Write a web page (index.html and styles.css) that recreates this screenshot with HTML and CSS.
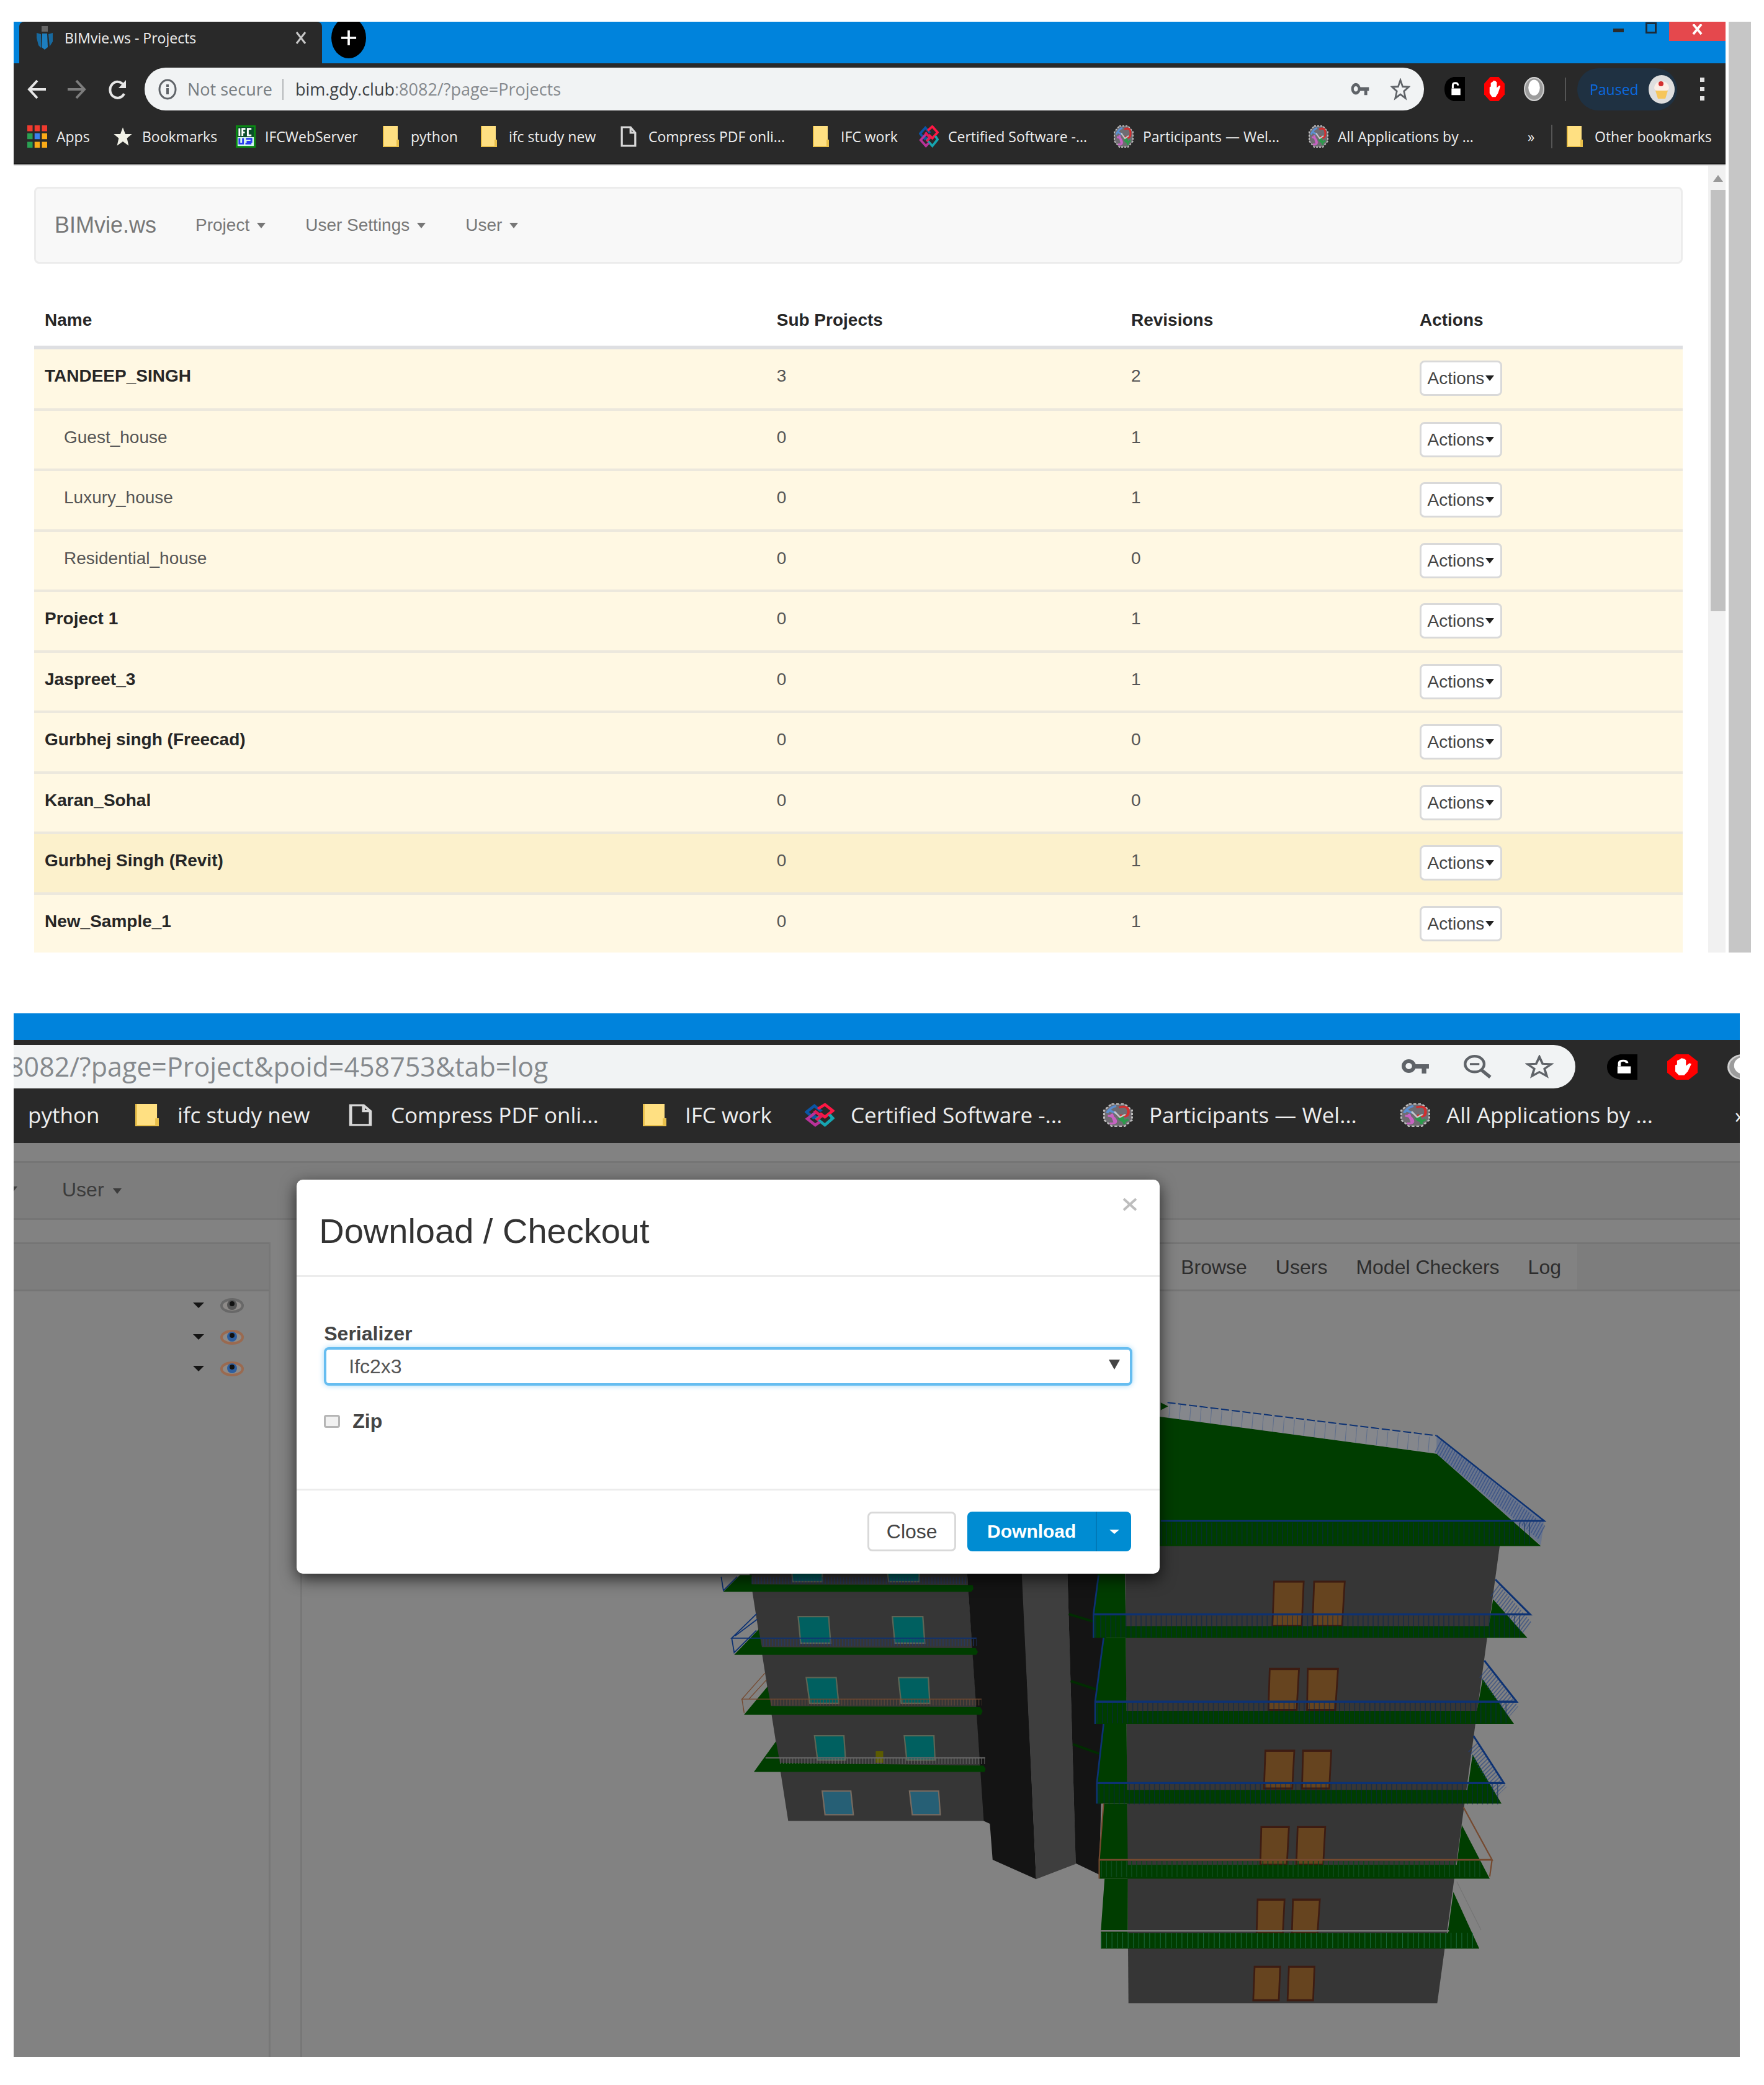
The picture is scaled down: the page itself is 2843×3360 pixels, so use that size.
FILE: index.html
```html
<!DOCTYPE html>
<html lang="en">
<head>
<meta charset="utf-8">
<title>BIMvie.ws - Projects</title>
<link rel="stylesheet" href="styles.css">
</head>
<body>
<svg class="defs" width="0" height="0" aria-hidden="true">
  <symbol id="folder" viewBox="0 0 26 34" preserveAspectRatio="none"><path d="M0 0h24v22h2v12H0z" fill="#ffe082"/><path d="M0 32h26v2H0zM22 22h4v12h-4zM0 0h2v34H0z" fill="#e8bf4a"/></symbol>
  <symbol id="doc" viewBox="0 0 24 34" preserveAspectRatio="none"><path d="M2 2h13l7 9v21H2zM15 2v9h7" fill="none" stroke="#d8d8d8" stroke-width="3"/></symbol>
  <symbol id="cert" viewBox="0 0 34 38" preserveAspectRatio="none"><g fill="none" stroke-width="4"><path d="M13 20l-3 3-8-9 9-10 8 9" stroke="#0a55a5"/><path d="M15 9l8-7 9 10-9 10-6-6" stroke="#ff1744"/><path d="M28 18l4 6-9 11-9-10 4-5" stroke="#16a5b0"/><path d="M17 30l-5 5-9-10 10-11" stroke="#b83299"/><path d="M11 12l8 9-6 6" stroke="#e01a59"/></g></symbol>
  <symbol id="globe" viewBox="0 0 32 34" preserveAspectRatio="none"><path d="M9 1h14l8 9v14l-8 9H9l-8-9V10z" fill="#6f6c72" stroke="#bdbdbd" stroke-width="2" stroke-dasharray="3 2"/><g fill="none" stroke-width="3"><path d="M4 14q4-9 10-10M6 10l8 4" stroke="#5b8fd0"/><path d="M17 6q10-4 10 6t-9 5" stroke="#d22f2f"/><path d="M5 18q6 0 8 6t-6 5M9 15l4 14" stroke="#c763c2"/><path d="M17 21q4 8 10 2M20 18l3 12" stroke="#2c9a4b"/><path d="M12 12l6 8 6-4" stroke="#c9c9c9" stroke-width="2"/></g></symbol>
  <symbol id="key" viewBox="0 0 44 26" preserveAspectRatio="none"><circle cx="12" cy="12" r="8" fill="none" stroke="#5f6368" stroke-width="6"/><path d="M20 9h23v7h-4v8h-7v-8H20z" fill="#5f6368"/></symbol>
  <symbol id="star-o" viewBox="0 0 24 24" preserveAspectRatio="none"><path d="M12 2l2.7 7 7.3.4-5.700 4.700L18.200 21.500 12 17.400 5.800 21.500 7.700 14.100 2 9.400 9.300 9z" fill="none" stroke="#5f6368" stroke-width="2"/></symbol>
  <symbol id="ext-lock" viewBox="0 0 32 40" preserveAspectRatio="none"><path d="M14 0h18v40H14Q0 36 0 20T14 0z" fill="#000"/><path d="M11 19h14v11H11z" fill="#fff"/><path d="M13 19v-5q0-4 4-4t4 4" fill="none" stroke="#fff" stroke-width="3"/></symbol>
  <symbol id="ext-hand" viewBox="0 0 34 40" preserveAspectRatio="none"><path d="M10 0h14l10 11v18L24 40H10L0 29V11z" fill="#f00"/><path d="M9 17l2-1V10l3-2 2-2 3 1 2 2v9l4-4 2 1-4 12-4 6h-6l-4-6z" fill="#fff"/></symbol>
  <symbol id="ext-ball" viewBox="0 0 32 34" preserveAspectRatio="none"><ellipse cx="16" cy="17" rx="15" ry="16" fill="#9c9c9c" stroke="#d0d0d0" stroke-width="2"/><ellipse cx="16" cy="15" rx="9" ry="11" fill="#fff"/></symbol>
  <symbol id="eye" viewBox="0 0 38 24"><ellipse cx="19" cy="12" rx="17" ry="10" fill="#8d8a88" stroke="currentColor" stroke-width="4"/><circle class="iris" cx="19" cy="11" r="8"/><circle cx="19" cy="9" r="4" fill="#111"/></symbol>
</svg>

<section class="shot">
  <div class="browser">
    <header class="tabstrip">
      <div class="tab">
        <svg class="favicon" viewBox="0 0 28 38"><path d="M9 0h10v9H9z" fill="#666"/><path d="M1 11l7 2v22l-4-4-3-12z" fill="#17699f"/><path d="M10 12h8l1 22-5 4-5-4z" fill="#1d7fc0"/><path d="M20 13l7-2v14l-5 8z" fill="#17699f"/></svg>
        <span class="tab-title">BIMvie.ws - Projects</span>
        <button class="tab-close" aria-label="Close tab"><svg viewBox="0 0 18 22"><path d="M2 2l14 18M16 2L2 20" stroke="#c8c8c8" stroke-width="3"/></svg></button>
      </div>
      <button class="new-tab" aria-label="New tab"><svg viewBox="0 0 28 28"><path d="M14 1v26M1 14h26" stroke="#fff" stroke-width="4"/></svg></button>
      <div class="win-controls">
        <button class="win min" aria-label="Minimize"></button>
        <button class="win restore" aria-label="Restore"></button>
        <button class="win close" aria-label="Close"><svg viewBox="0 0 18 18"><path d="M2 0l14 17M16 0L2 17" stroke="#fff" stroke-width="4"/></svg></button>
      </div>
    </header>
    <div class="toolbar">
      <button class="tool" aria-label="Back"><svg viewBox="0 0 30 34"><path d="M30 17H4M16 3L3 17l13 14" fill="none" stroke="#e6e6e6" stroke-width="4"/></svg></button>
      <button class="tool" aria-label="Forward"><svg viewBox="0 0 30 34"><path d="M0 17h26M14 3l13 14-13 14" fill="none" stroke="#7d7d7d" stroke-width="4"/></svg></button>
      <button class="tool" aria-label="Reload"><svg viewBox="0 0 30 34"><path d="M26 24a12 13 0 1 1-1-14" fill="none" stroke="#e6e6e6" stroke-width="4"/><path d="M29 2v13H17z" fill="#e6e6e6"/></svg></button>
      <div class="omnibox">
        <svg class="info" viewBox="0 0 30 34" preserveAspectRatio="none"><ellipse cx="15" cy="17" rx="13" ry="15" fill="none" stroke="#5f6368" stroke-width="3"/><path d="M15 9v4M15 15v10" stroke="#5f6368" stroke-width="4"/></svg>
        <span class="insecure">Not secure</span>
        <label class="host" for="url1">bim.gdy.club</label><input id="url1" class="url" value=":8082/?page=Projects">
        <svg class="i-key"><use href="#key"/></svg>
        <svg class="i-star"><use href="#star-o"/></svg>
      </div>
      <div class="exts">
        <svg><use href="#ext-lock"/></svg><svg><use href="#ext-hand"/></svg><svg><use href="#ext-ball"/></svg>
      </div>
      <span class="rule"></span>
      <button class="profile">Paused
        <svg viewBox="0 0 42 46"><ellipse cx="21" cy="23" rx="21" ry="23" fill="#dedede"/><path d="M9 20q2-10 12-10t12 10q0 5-6 5H15q-6 0-6-5z" fill="#fbeee6"/><path d="M11 25h20l-4 13H15z" fill="#f6c65b"/><circle cx="20" cy="14" r="4" fill="#d32f2f"/></svg>
      </button>
      <button class="dots" aria-label="Menu"><i></i><i></i><i></i></button>
    </div>
    <nav class="bookmarks">
      <a href="#"><svg viewBox="0 0 30 34" preserveAspectRatio="none"><path d="M0 0h8v9H0zM11 0h8v9h-8zM22 0h8v9h-8z" fill="#f03a2e"/><path d="M0 12h8v9H0zM0 25h8v9H0z" fill="#2aa052"/><path d="M11 12h8v9h-8z" fill="#3b82f0"/><path d="M22 12h8v9h-8zM11 25h8v9h-8zM22 25h8v9h-8z" fill="#fbab17"/></svg>Apps</a>
      <a href="#"><svg viewBox="0 0 24 24"><path d="M12 1l3 8h8l-6 5 2 9-7-5-7 5 2-9-6-5h8z" fill="#f1f1e6"/></svg>Bookmarks</a>
      <a href="#"><svg viewBox="0 0 33 38" preserveAspectRatio="none"><path d="M0 0h33v38H0z" fill="#0a8a12"/><path d="M3 3h27v17H3z" fill="#0b4d2a"/><path d="M3 20h27v15H3z" fill="#d5f5ee"/><path d="M6 5v13M11 18V6h5M11 12h4M26 6h-6v11h6" stroke="#fff" stroke-width="3" fill="none"/><path d="M6 22v9h6v-9M16 31h10M17 23h9v5h-8" stroke="#2a3cf0" stroke-width="3" fill="none"/></svg>IFCWebServer</a>
      <a href="#"><svg class="narrow"><use href="#folder"/></svg>python</a>
      <a href="#"><svg class="narrow"><use href="#folder"/></svg>ifc study new</a>
      <a href="#"><svg class="narrow"><use href="#doc"/></svg>Compress PDF onli...</a>
      <a href="#"><svg class="narrow"><use href="#folder"/></svg>IFC work</a>
      <a href="#"><svg><use href="#cert"/></svg>Certified Software -...</a>
      <a href="#"><svg><use href="#globe"/></svg>Participants — Wel...</a>
      <a href="#"><svg><use href="#globe"/></svg>All Applications by ...</a>
      <a href="#">»</a>
      <span class="rule"></span>
      <a href="#"><svg class="narrow"><use href="#folder"/></svg>Other bookmarks</a>
    </nav>
    <div class="viewport">
      <main class="page">
        <nav class="navbar">
          <a class="brand" href="#">BIMvie.ws</a>
          <a class="menu" href="#">Project<i class="caret"></i></a>
          <a class="menu" href="#">User Settings<i class="caret"></i></a>
          <a class="menu" href="#">User<i class="caret"></i></a>
        </nav>
        <table class="projects">
          <thead><tr><th class="c-name">Name</th><th class="c-sub">Sub Projects</th><th class="c-rev">Revisions</th><th>Actions</th></tr></thead>
          <tbody>
            <tr><td class="top">TANDEEP_SINGH</td><td>3</td><td>2</td><td><button class="action">Actions<i class="caret"></i></button></td></tr>
            <tr><td class="sub">Guest_house</td><td>0</td><td>1</td><td><button class="action">Actions<i class="caret"></i></button></td></tr>
            <tr><td class="sub">Luxury_house</td><td>0</td><td>1</td><td><button class="action">Actions<i class="caret"></i></button></td></tr>
            <tr><td class="sub">Residential_house</td><td>0</td><td>0</td><td><button class="action">Actions<i class="caret"></i></button></td></tr>
            <tr><td class="top">Project 1</td><td>0</td><td>1</td><td><button class="action">Actions<i class="caret"></i></button></td></tr>
            <tr><td class="top">Jaspreet_3</td><td>0</td><td>1</td><td><button class="action">Actions<i class="caret"></i></button></td></tr>
            <tr><td class="top">Gurbhej singh (Freecad)</td><td>0</td><td>0</td><td><button class="action">Actions<i class="caret"></i></button></td></tr>
            <tr><td class="top">Karan_Sohal</td><td>0</td><td>0</td><td><button class="action">Actions<i class="caret"></i></button></td></tr>
            <tr class="hover"><td class="top">Gurbhej Singh (Revit)</td><td>0</td><td>1</td><td><button class="action">Actions<i class="caret"></i></button></td></tr>
            <tr><td class="top">New_Sample_1</td><td>0</td><td>1</td><td><button class="action">Actions<i class="caret"></i></button></td></tr>
          </tbody>
        </table>
      </main>
      <div class="scrollbar"><i class="arrow"></i><i class="thumb"></i></div>
    </div>
  </div>
  <div class="edge"></div>
</section>

<section class="zoomed">
  <div class="strip"></div>
  <div class="toolbar2">
    <div class="omnibox2">
      <input class="url2" aria-label="Address" value="8082/?page=Project&amp;poid=458753&amp;tab=log">
      <svg class="k"><use href="#key"/></svg>
      <svg viewBox="0 0 42 36" preserveAspectRatio="none"><ellipse cx="17" cy="14" rx="14" ry="12" fill="none" stroke="#5f6368" stroke-width="4"/><path d="M27 23l13 11" stroke="#5f6368" stroke-width="5"/><path d="M10 14h14" stroke="#5f6368" stroke-width="3"/></svg>
      <svg><use href="#star-o"/></svg>
    </div>
    <div class="exts2"><svg><use href="#ext-lock"/></svg><svg><use href="#ext-hand"/></svg><svg><use href="#ext-ball"/></svg></div>
  </div>
  <nav class="bookmarks2">
    <a href="#">python</a>
    <a href="#"><svg><use href="#folder"/></svg>ifc study new</a>
    <a href="#"><svg><use href="#doc"/></svg>Compress PDF onli...</a>
    <a href="#"><svg><use href="#folder"/></svg>IFC work</a>
    <a href="#"><svg class="wide"><use href="#cert"/></svg>Certified Software -...</a>
    <a href="#"><svg class="wide"><use href="#globe"/></svg>Participants — Wel...</a>
    <a href="#"><svg class="wide"><use href="#globe"/></svg>All Applications by ...</a>
    <a href="#">»</a>
  </nav>
  <div class="dimmed">
    <nav class="navbar2"><i class="caret"></i><a href="#">User<i class="caret"></i></a></nav>
    <div class="panels">
      <aside class="tree">
        <div class="panel-head"></div>
        <ul>
          <li><i class="caret"></i><svg class="eye off"><use href="#eye"/></svg></li>
          <li><i class="caret"></i><svg class="eye"><use href="#eye"/></svg></li>
          <li><i class="caret"></i><svg class="eye"><use href="#eye"/></svg></li>
        </ul>
      </aside>
      <div class="viewer">
        <div class="panel-head tabs">
          <div class="tablist"><a href="#">Browse</a><a href="#">Users</a><a href="#">Model Checkers</a><a href="#">Log</a></div>
        </div>
        <svg class="model" viewBox="487 2080 2317 1234" preserveAspectRatio="xMinYMin slice">
          <g transform="translate(1140 2380) scale(.4464)">
            <path d="M145 300h790l65 940H292z" fill="#363636"/>
            <path d="M935 300h200l52 1150-157-70-10-130-22-10z" fill="#141414"/>
            <path d="M1133 300h166l31 1095-143 55z" fill="#3e3e3e"/>
            <path d="M1299 300h150l-35 1133-84-40z" fill="#141414"/>
            <path d="M1305 493l92 28M1312 735l92 30M1320 963l95 34" stroke="#012c01" stroke-width="9"/>
            <g fill="#006060" stroke="#5c6555" stroke-width="5">
              <path d="M305 340h110v36H308zM650 340h115v36H655z"/>
              <path d="M328 502h110l7 96H337zM668 502h110l7 96H677zM357 722h108l9 93H370zM690 722h108l5 93H700zM387 932h106l6 88H398zM711 932h107l4 88H720z"/>
              <path d="M415 1132h103l9 85H425zM730 1132h105l6 85H740z" fill="#265f75" stroke="#776b60"/>
            </g>
            <path d="M608 988h27v42h-27z" fill="#5c5c00"/>
            <g fill="#003d00">
              <path d="M58 412l60-60h42v34l798 2 3 14-8 10zM97 640l88-92 12 64 772 4 8 14-6 10zM132 857l85-102 13 70 755 4 9 14-6 14zM168 1063l80-111 14 78 735 10 8 12-4 11z"/>
            </g>
            <g fill="none" stroke-dasharray="4 7" opacity=".6">
              <path d="M160 372h775M200 596h772" stroke="#223a70" stroke-width="26"/>
              <path d="M230 812h760" stroke="#6b4c3a" stroke-width="22"/>
              <path d="M262 1024h740" stroke="#6c6c6c" stroke-width="22"/>
            </g>
            <path d="M178 492L88 580h884M88 580l9 52 80-80M50 358l8 50 50-50M100 572l80-60" fill="none" stroke="#0d3273" stroke-width="4"/>
            <path d="M208 706l-83 94h865M125 800l8 50M150 800l64-70" fill="none" stroke="#75492f" stroke-width="3"/>
            <path d="M210 1012h793" stroke="#676767" stroke-width="5"/>
          </g>
          <g transform="translate(1700 2220) scale(.5421 .676)">
            <path d="M209 398h1114l-186 1092H219z" fill="#363636"/>
            <g fill="#66441f" stroke="#3d1c12" stroke-width="5">
              <path d="M652 485h88l-6 106h-87zM771 485h91l-8 106h-88zM639 693h87l-7 98h-84zM752 693h90l-8 98h-84zM626 888h86l-6 90h-84zM738 888h84l-6 90h-81zM614 1070h82l-6 90h-79zM722 1070h82l-6 90h-80zM603 1243h80l-5 80h-78zM708 1243h80l-7 80h-76zM594 1403h76l-4 80h-76zM696 1403h76l-4 80h-76z"/>
            </g>
            <g fill="#003d00">
              <path d="M300 90l15 2 820 88 310 220H300zM315 58l22 9-22 9z"/>
              <path d="M130 440h78l3 151h1079l13-64 102 92H116v-56z"/>
              <path d="M145 619h66l2 174h1042l17-76 93 107H120v-53z"/>
              <path d="M145 824h68l2 158h1012l15-85 86 117H126v-49z"/>
              <path d="M145 1014h70l2 146h978l15-95 83 128H133v-45z"/>
              <path d="M148 1193h69v130h951l17-98 77 135H137v-43z"/>
            </g>
            <path d="M335 58l800 79v43L340 94z" fill="#8a8f9a" opacity=".4"/>
            <path d="M1135 137l320 201-10 60-310-218z" fill="#4d6799" opacity=".45"/>
            <g fill="none" stroke-dasharray="3 12">
              <path d="M315 370h1100M120 592h1270M125 797h1225M130 990h1190" stroke="#08264f" stroke-width="52" opacity=".55"/>
              <path d="M340 78l795 82" stroke="#2b4d8d" stroke-width="36" opacity=".4" stroke-dasharray="2 29"/>
              <path d="M1140 160l308 208M1308 505l95 90M1276 700l88 95M1244 878l84 108" stroke="#1f3f83" stroke-width="38" stroke-dasharray="3 5" opacity=".55"/>
              <path d="M137 1170h1130" stroke="#0c4a1b" stroke-width="38"/>
              <path d="M137 1340h1110" stroke="#19663b" stroke-width="36" stroke-dasharray="2 14"/>
            </g>
            <g fill="none" stroke="#0d3273">
              <path d="M335 58l800 79" stroke-width="3" stroke-dasharray="24 8"/>
              <path d="M315 340h1140L1135 137" stroke-width="4"/>
              <path d="M130 470l-15 93v56M115 563h1298l-103-83M145 619l-25 152v53M120 771h1253l-96-98M145 824l-20 141v49M125 965h1210l-90-112" stroke-width="5"/>
            </g>
            <path d="M145 1014l-13 134v45M132 1148h1168l-85-125M1300 1148l-7 40" fill="none" stroke="#75492f" stroke-width="4"/>
            <path d="M137 1317h1035" stroke="#777" stroke-width="4"/><path d="M1195 1200l72 115" stroke="#747474" stroke-width="2"/>
          </g>
        </svg>
      </div>
    </div>
  </div>
  <div class="modal" role="dialog" aria-labelledby="dlg-title">
    <div class="modal-head"><h1 id="dlg-title">Download / Checkout</h1><button class="dismiss" aria-label="Dismiss"><svg viewBox="0 0 24 20"><path d="M2 1l20 18M22 1L2 19" stroke="#bdbdbd" stroke-width="4"/></svg></button></div>
    <div class="modal-body">
      <label class="field-label" for="ser">Serializer</label>
      <div class="select-wrap"><select id="ser"><option>Ifc2x3</option></select></div>
      <label class="check"><input type="checkbox">Zip</label>
    </div>
    <div class="modal-foot">
      <button class="btn">Close</button>
      <div class="split"><button class="primary">Download</button><button class="primary toggle" aria-label="More options"><i class="caret"></i></button></div>
    </div>
  </div>
</section>
</body>
</html>
```
FILE: styles.css
```css
* { box-sizing: border-box; }
body { margin: 0; padding: 35px 21px 46px 22px; background: #fff; font: 28px/50px "Liberation Sans", Arial, sans-serif; color: #555; }
a { color: inherit; text-decoration: none; white-space: nowrap; }
button, input, select { font: inherit; color: inherit; margin: 0; padding: 0; border: 0; background: none; }
svg { display: block; flex: none; }
.defs { position: absolute; }
.caret { display: inline-block; border: 7px solid transparent; border-top: 9px solid; border-bottom: 0; flex: none; }

/* first window */
.shot { display: flex; gap: 5px; }
.browser { flex: 1; min-width: 0; }
.edge { width: 36px; background: #c6c6c6; }
.tabstrip { display: flex; height: 67px; background: #0083dc; padding-left: 9px; overflow: hidden; }
.tab { display: flex; align-items: center; width: 488px; padding: 0 25px 16px 27px; background: #292929; border-radius: 8px 8px 0 0; color: #eee; font: 23px/30px "Open Sans", sans-serif; }
.favicon { width: 28px; height: 38px; margin-right: 18px; }
.tab-title { flex: 1; white-space: nowrap; }
.tab-close svg { width: 18px; height: 22px; }
.new-tab { width: 56px; height: 66px; margin: -7px 0 0 15px; border-radius: 50%; background: #000; flex: none; }
.new-tab svg { width: 26px; height: 28px; margin: auto; }
.win-controls { display: flex; margin-left: auto; align-items: flex-start; }
.min { width: 17px; height: 6px; background: #2b2b2b; margin: 11px 35px 0 0; }
.restore { width: 18px; height: 18px; border: 3px solid #1d2a36; margin: 1px 20px 0 0; }
.close { width: 91px; height: 31px; background: #e5484d; }
.close svg { width: 17px; height: 17px; margin: -6px auto 0; }
.toolbar { display: flex; align-items: center; height: 76px; padding: 7px 34px 0 22px; background: #292929; font: 27px/34px "Open Sans", sans-serif; }
.tool { margin-right: 35px; }
.tool svg { width: 30px; height: 34px; }
.tool:nth-child(3) { margin-right: 29px; }
.omnibox { flex: 1; display: flex; align-items: center; height: 69px; padding: 0 22px; border-radius: 34px; background: #f1f3f4; color: #777c80; min-width: 0; }
.info { width: 30px; height: 34px; margin-right: 17px; }
.insecure { padding-right: 16px; margin-right: 19px; border-right: 2px solid #b5b8bb; white-space: nowrap; }
.host { color: #3c4043; }
.url { flex: 1; min-width: 0; color: #85898d; }
.i-key { width: 30px; height: 22px; margin-right: 34px; }
.i-star { width: 32px; height: 36px; }
.exts { display: flex; gap: 31px; margin: 0 33px; }
.exts svg { width: 33px; height: 39px; }
.rule { width: 2px; height: 38px; background: #555; }
.profile { display: flex; align-items: center; justify-content: space-between; width: 161px; height: 68px; margin-left: 18px; padding: 0 4px 0 20px; border-radius: 34px; background: #1f3142; color: #0b6ae0; font: 23px/30px "Open Sans", sans-serif; }
.profile svg { width: 42px; height: 48px; }
.dots { display: grid; gap: 8px; margin-left: 37px; }
.dots i { width: 7px; height: 7px; background: #e3e3e3; }
.bookmarks { display: grid; grid-template-columns: 138fr 198fr 237fr 158fr 225fr 310fr 171fr 314fr 314fr 353fr 38fr 25fr 233fr; align-items: center; height: 87px; padding: 0 23px 2px 22px; background: #292929; border-bottom: 2px solid #1b1b1b; color: #eee; font: 23px/34px "Open Sans", sans-serif; }
.bookmarks > * { min-width: 0; }
.bookmarks a { display: flex; align-items: center; }
.bookmarks a svg { width: 32px; height: 36px; margin-right: 15px; }
.bookmarks a .narrow { width: 26px; height: 34px; margin-right: 19px; }
.viewport { display: flex; border-top: 2px solid #ddd; }
.page { flex: 1; padding: 34px 41px 0 33px; min-width: 0; }
.navbar { display: flex; align-items: center; height: 124px; padding-left: 30px; border: 3px solid #ececec; border-radius: 8px; background: #f8f8f8; color: #777; }
.brand { font-size: 36px; margin-right: 63px; }
.menu { margin-right: 64px; }
.menu .caret { margin: 0 0 4px 12px; }
.projects { width: 100%; margin-top: 48px; border-collapse: separate; border-spacing: 0; table-layout: fixed; }
th { padding: 18px 17px 16px; text-align: left; color: #262626; border-bottom: 6px solid #dedfe2; }
.c-name { width: 44.4%; }
.c-sub { width: 21.5%; }
.c-rev { width: 17.5%; }
td { padding: 18px 17px 0; height: 97px; vertical-align: top; background: #fff8e3; border-top: 4px solid #ece8dd; }
tr:nth-child(odd) td { height: 98px; }
tr:first-child td { height: 95px; border-top: 0; }
tr.hover td { background: #fcf1cc; }
td.top { font-weight: bold; color: #262626; }
td.sub { padding-left: 48px; }
.action { display: flex; align-items: center; justify-content: center; gap: 2px; width: 133px; height: 57px; border: 3px solid #d9d9d9; border-radius: 8px; background: #fff; color: #444; }
.action .caret { color: #222; }
.scrollbar { width: 28px; background: #f1f1f1; padding: 15px 0 0 4px; }
.arrow { display: block; width: 0; margin: 0 0 13px 4px; border: 8px solid transparent; border-bottom: 11px solid #999; border-top: 0; }
.thumb { display: block; height: 679px; background: #c1c1c1; }

/* second window */
.zoomed { position: relative; margin: 98px 18px 0 0; overflow: hidden; font-size: 32px; }
.strip { height: 43px; background: #0083dc; }
.toolbar2 { display: flex; height: 78px; padding-top: 8px; background: #292929; overflow: hidden; }
.omnibox2 { display: flex; flex: 1; min-width: 0; align-items: center; gap: 54px; height: 70px; padding-right: 35px; background: #f1f3f4; border-radius: 0 35px 35px 0; }
.omnibox2 svg { width: 46px; height: 38px; }
.omnibox2 .k { height: 26px; }
.url2 { flex: 1; min-width: 0; margin-left: -8px; font: 43px/60px "Open Sans", sans-serif; color: #85898d; }
.exts2 { display: flex; align-items: center; gap: 48px; width: 265px; padding-left: 51px; overflow: hidden; }
.exts2 svg { width: 49px; height: 41px; }
.bookmarks2 { display: grid; grid-template-columns: 173fr 344fr 474fr 261fr 481fr 479fr 539fr 8fr; align-items: center; height: 88px; padding: 0 0 2px 23px; background: #292929; color: #eee; font: 35px/44px "Open Sans", sans-serif; overflow: hidden; }
.bookmarks2 > * { min-width: 0; }
.bookmarks2 a { display: flex; align-items: center; }
.bookmarks2 svg { width: 38px; height: 36px; margin-right: 30px; }
.bookmarks2 .wide { width: 48px; height: 38px; margin-right: 26px; }
.dimmed { padding-top: 29px; background: #828282; color: #2d2d2d; }
.navbar2 { display: flex; align-items: center; gap: 72px; height: 95px; padding-bottom: 4px; border: solid #757575; border-width: 3px 0; background: #7d7d7d; color: #3c3c3c; }
.navbar2 > .caret { margin-left: -8px; }
.navbar2 a .caret { margin: 0 0 4px 14px; }
.panels { display: flex; gap: 48px; margin-top: 36px; }
.tree { width: 414px; border-right: 3px solid #777; }
.panel-head { height: 79px; border: solid #757575; border-width: 3px 0; background: #7d7d7d; }
.tree ul { list-style: none; margin: -3px 0 0; padding: 0; }
.tree li { display: flex; align-items: center; justify-content: flex-end; gap: 26px; height: 51px; padding-right: 40px; }
.tree li .caret { color: #151515; border-left-width: 9px; border-right-width: 9px; }
.eye { width: 38px; height: 24px; color: #9a6a50; fill: #2f5f9f; }
.eye.off { color: #686868; fill: #555; }
.viewer { flex: 1; min-width: 0; border-left: 3px solid #777; }
.tablist { display: flex; justify-content: flex-end; align-items: center; gap: 46px; width: 2055px; height: 73px; padding-right: 26px; background: #828282; }
.model { width: 100%; height: auto; }
.modal { position: absolute; top: 268px; left: 16.4%; width: 50%; background: #fff; border-radius: 10px; box-shadow: 0 8px 26px rgba(0, 0, 0, .7); color: #444; }
.modal-head { display: flex; justify-content: space-between; height: 157px; padding: 50px 36px 0; border-bottom: 3px solid #ececec; }
h1 { margin: 0; font-weight: normal; font-size: 56px; line-height: 66px; color: #333; }
.dismiss { height: 20px; margin-top: -20px; }
.dismiss svg { width: 24px; height: 20px; }
.modal-body { height: 341px; padding: 69px 44px 0; }
.field-label { display: block; font-weight: bold; line-height: 44px; }
.select-wrap { position: relative; }
.select-wrap::after { content: ""; position: absolute; right: 20px; top: 20px; border: 9px solid transparent; border-top: 16px solid #444; border-bottom: 0; }
select { display: block; width: 100%; height: 62px; padding: 0 36px; appearance: none; border: 4px solid #66bdf0; border-radius: 8px; background: #fff; box-shadow: 0 0 10px #a8daf7; color: #555; }
.check { display: flex; align-items: center; gap: 20px; margin-top: 32px; font-weight: bold; }
.check input { width: 26px; height: 21px; appearance: none; border: 3px solid #b5b5b5; border-radius: 4px; background: #f1f1f1; }
.modal-foot { display: flex; justify-content: flex-end; gap: 18px; height: 137px; padding: 34px 46px 0 0; border-top: 3px solid #ececec; }
.btn { width: 143px; height: 64px; border: 3px solid #d9d9d9; border-radius: 8px; }
.split { display: flex; height: 64px; }
.primary { width: 207px; border-radius: 8px 0 0 8px; background: #008cd2; color: #fff; font-weight: bold; font-size: 30px; }
.toggle { width: 57px; border-left: 2px solid #0079b8; border-radius: 0 8px 8px 0; }
.toggle .caret { border-width: 7px 8px 0; margin-bottom: 6px; }
```
